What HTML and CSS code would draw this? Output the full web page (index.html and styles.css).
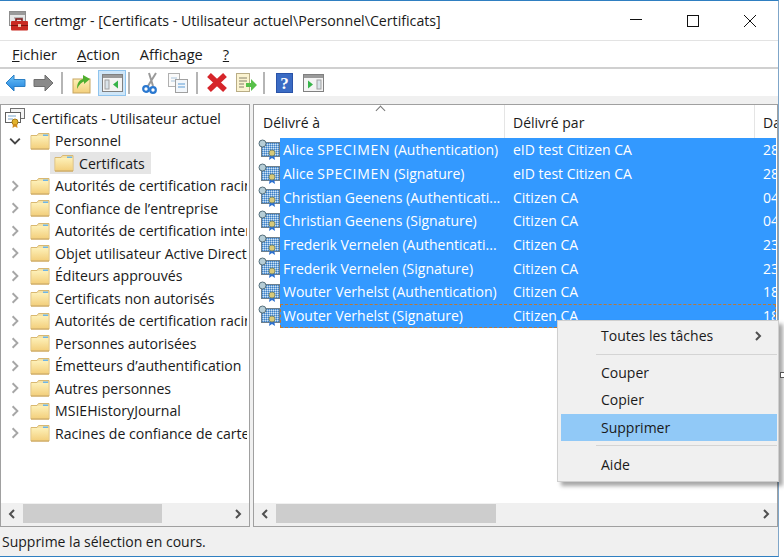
FILE: index.html
```html
<!DOCTYPE html>
<html lang="fr">
<head>
  <meta charset="UTF-8">
  <title>certmgr</title>
  <link rel="stylesheet" href="styles.css">
</head>
<body>
  <svg class="defs" width="0" height="0">
    <defs>
      <linearGradient id="folderFill" x1="0" y1="0" x2="0" y2="1">
        <stop offset="0" stop-color="#fdf0b8"/>
        <stop offset="1" stop-color="#f3cf7c"/>
      </linearGradient>
      <linearGradient id="backFill" x1="0" y1="0" x2="0" y2="1">
        <stop offset="0" stop-color="#6cc4f8"/>
        <stop offset="1" stop-color="#1f7fdc"/>
      </linearGradient>
      <pattern id="dither" width="2" height="2" patternUnits="userSpaceOnUse">
        <rect width="2" height="2" fill="#7fb0de"/>
        <rect width="1" height="1" fill="#3f7fc4"/>
        <rect x="1" y="1" width="1" height="1" fill="#cfe2f4"/>
      </pattern>
      <symbol id="folder" viewBox="0 0 20 18">
        <path d="M1 3.500h6l1.500-2h10.500v15.500h-18z" fill="#f5e2a5" stroke="#d9b871"/>
        <rect x="1.500" y="4" width="17" height="12.500" fill="url(#folderFill)"/>
        <rect x="13" y="2.500" width="5" height="1.500" fill="#6fb5e6"/>
        <path d="M1 17h18" stroke="#c9a45c"/>
      </symbol>
      <symbol id="cert" viewBox="0 0 22 22">
        <rect x="3.500" y="3.500" width="18" height="14" fill="url(#dither)" stroke="#6d7f8c"/>
        <circle cx="4.500" cy="4.500" r="3.500" fill="#b6cdd6" stroke="#56707c"/>
        <path d="M12 15l-1 6 3-2 3 2-1-6z" fill="#2a6fd0"/>
        <circle cx="14" cy="14" r="3" fill="#d8c978" stroke="#7c8a6c"/>
      </symbol>
      <symbol id="chevron" viewBox="0 0 10 10">
        <path d="M3 1l4 4-4 4" fill="none" stroke="#a6a6a6" stroke-width="1.600"/>
      </symbol>
      <symbol id="chevronDark" viewBox="0 0 10 10">
        <path d="M3 1l4 4-4 4" fill="none" stroke="#505050" stroke-width="2"/>
      </symbol>
    </defs>
  </svg>

  <div class="window">
    <div class="titlebar">
      <svg class="app-icon" width="20" height="20" viewBox="0 0 20 20">
        <rect x="0.500" y="0.500" width="16" height="14" fill="#e6e6e6" stroke="#8d8d8d"/>
        <rect x="1" y="1" width="15" height="3" fill="#9a9a9a"/>
        <rect x="5" y="6" width="9" height="2" fill="#b8b8b8"/>
        <path d="M7 10V8h6v2" fill="none" stroke="#7a1515" stroke-width="1.500"/>
        <rect x="2" y="10" width="17" height="9.500" rx="1" fill="#c92a22"/>
        <rect x="2" y="14" width="17" height="1" fill="#7f1410"/>
        <rect x="9" y="13" width="3" height="3" fill="#f0c8b0"/>
      </svg>
      <span class="title">certmgr - [Certificats - Utilisateur actuel\Personnel\Certificats]</span>
      <div class="caption">
        <svg class="cap-btn" width="14" height="14" viewBox="0 0 14 14"><path d="M1 5.500h12" stroke="#111"/></svg>
        <svg class="cap-btn" width="14" height="14" viewBox="0 0 14 14"><rect x="1.500" y="1.500" width="11" height="11" fill="none" stroke="#111"/></svg>
        <svg class="cap-btn" width="14" height="14" viewBox="0 0 14 14"><path d="M1 1l12 12M13 1L1 13" stroke="#111"/></svg>
      </div>
    </div>

    <div class="menubar">
      <span class="menu"><u>F</u>ichier</span>
      <span class="menu"><u>A</u>ction</span>
      <span class="menu">Affic<u>h</u>age</span>
      <span class="menu"><u>?</u></span>
    </div>

    <div class="toolbar">
      <span class="tool">
        <svg width="21" height="18" viewBox="0 0 21 18"><path d="M1 9l8-8v4.500h11v7H9V17z" fill="url(#backFill)" stroke="#2b7fc4"/></svg>
      </span>
      <span class="tool">
        <svg width="21" height="18" viewBox="0 0 21 18"><path d="M20 9l-8-8v4.500H1v7h11V17z" fill="#8a8a8a" stroke="#6f6f6f"/></svg>
      </span>
      <span class="tool-sep"></span>
      <span class="tool tool-first">
        <svg width="20" height="22" viewBox="0 0 20 22"><rect x="1" y="7" width="17" height="14" fill="url(#folderFill)" stroke="#c7a560"/><path d="M5 17c0-6 2-9 6-10V3l7 4-6 5V9.500c-2 .5-5 3-7 7.500z" fill="#4fae2e"/></svg>
      </span>
      <span class="tool tool-on">
        <svg width="21" height="18" viewBox="0 0 21 18"><rect x="0.500" y="0.500" width="20" height="17" fill="#f4f4f4" stroke="#808080"/><rect x="1" y="1" width="19" height="3" fill="#9a9a9a"/><rect x="3" y="6" width="4" height="9" fill="#d9e3ea" stroke="#a0a0a0"/><path d="M16 6.500v8l-5-4z" fill="#37b44a"/></svg>
      </span>
      <span class="tool-sep sep-near"></span>
      <span class="tool tool-first tool-cut">
        <svg width="16" height="22" viewBox="0 0 16 22"><path d="M14 1L6 14M7 1l4 13" stroke="#9a9a9a" stroke-width="2" fill="none"/><circle cx="4" cy="17" r="2.800" fill="none" stroke="#2a78d0" stroke-width="2.200"/><circle cx="11" cy="18" r="2.800" fill="none" stroke="#2a78d0" stroke-width="2.200"/></svg>
      </span>
      <span class="tool">
        <svg width="20" height="20" viewBox="0 0 20 20"><rect x="0.500" y="0.500" width="11" height="13" fill="#fafafa" stroke="#b0b0b0"/><path d="M3 5h6M3 8h6" stroke="#a8c4dc"/><rect x="7.500" y="6.500" width="12" height="13" fill="#f2f6fa" stroke="#a0a0a0"/><path d="M10 11h7M10 14h7" stroke="#5a9bd5"/></svg>
      </span>
      <span class="tool-sep"></span>
      <span class="tool tool-first">
        <svg width="22" height="21" viewBox="0 0 22 21"><path d="M3 3l16 15M19 3L3 18" stroke="#d6252a" stroke-width="5.500"/></svg>
      </span>
      <span class="tool tool-wide">
        <svg width="22" height="20" viewBox="0 0 22 20"><rect x="1.500" y="0.500" width="13" height="18" fill="#fbf3d0" stroke="#b9ad86"/><path d="M4 5h8M4 8h8M4 11h5M4 14h5" stroke="#85806a"/><path d="M11 10h5V6l6 6-6 6v-4h-5z" fill="#58c04a"/></svg>
      </span>
      <span class="tool-sep sep-help"></span>
      <span class="tool tool-first">
        <svg width="17" height="20" viewBox="0 0 17 20"><rect width="17" height="20" fill="#2a53a8"/><rect x="1" y="1" width="15" height="18" fill="#3a6bc4"/><text x="8.500" y="16" class="help-mark">?</text></svg>
      </span>
      <span class="tool tool-wide">
        <svg width="21" height="18" viewBox="0 0 21 18"><rect x="0.500" y="0.500" width="20" height="17" fill="#f4f4f4" stroke="#808080"/><rect x="1" y="1" width="19" height="3" fill="#9a9a9a"/><rect x="14" y="6" width="4" height="9" fill="#d9e3ea" stroke="#a0a0a0"/><path d="M5 6.500v8l5-4z" fill="#37b44a"/></svg>
      </span>
    </div>

    <div class="strip"></div>

    <div class="panes">
      <div class="pane pane-tree">
        <div class="tree">
          <div class="node node-root">
            <svg width="20" height="20" viewBox="0 0 20 20"><rect x="5.500" y="0.500" width="14" height="10" fill="#f4f4f4" stroke="#707070"/><rect x="0.500" y="4.500" width="15" height="10" fill="#fff" stroke="#606060"/><path d="M3 8h8M3 11h5" stroke="#7aa6cc"/><circle cx="10" cy="14" r="3" fill="#e2b22c" stroke="#a87c14"/><path d="M8 16l-.5 4 2.500-1.500 2.500 1.500-.5-4z" fill="#d08c1c"/></svg>
            <span>Certificats - Utilisateur actuel</span>
          </div>
          <div class="node">
            <svg class="twist" width="12" height="12" viewBox="0 0 10 10"><path d="M1 3l4 4 4-4" fill="none" stroke="#444" stroke-width="1.600"/></svg>
            <svg class="folder" width="20" height="18"><use href="#folder"/></svg>
            <span>Personnel</span>
          </div>
          <div class="node node-leaf">
            <span class="node-sel">
              <svg class="folder" width="20" height="18"><use href="#folder"/></svg>
              <span>Certificats</span>
            </span>
          </div>
          <div class="node"><svg class="twist" width="12" height="12"><use href="#chevron"/></svg><svg class="folder" width="20" height="18"><use href="#folder"/></svg><span>Autorités de certification racines de confiance</span></div>
          <div class="node"><svg class="twist" width="12" height="12"><use href="#chevron"/></svg><svg class="folder" width="20" height="18"><use href="#folder"/></svg><span>Confiance de l’entreprise</span></div>
          <div class="node"><svg class="twist" width="12" height="12"><use href="#chevron"/></svg><svg class="folder" width="20" height="18"><use href="#folder"/></svg><span>Autorités de certification intermédiaires</span></div>
          <div class="node"><svg class="twist" width="12" height="12"><use href="#chevron"/></svg><svg class="folder" width="20" height="18"><use href="#folder"/></svg><span>Objet utilisateur Active Directory</span></div>
          <div class="node"><svg class="twist" width="12" height="12"><use href="#chevron"/></svg><svg class="folder" width="20" height="18"><use href="#folder"/></svg><span>Éditeurs approuvés</span></div>
          <div class="node"><svg class="twist" width="12" height="12"><use href="#chevron"/></svg><svg class="folder" width="20" height="18"><use href="#folder"/></svg><span>Certificats non autorisés</span></div>
          <div class="node"><svg class="twist" width="12" height="12"><use href="#chevron"/></svg><svg class="folder" width="20" height="18"><use href="#folder"/></svg><span>Autorités de certification racines tierces</span></div>
          <div class="node"><svg class="twist" width="12" height="12"><use href="#chevron"/></svg><svg class="folder" width="20" height="18"><use href="#folder"/></svg><span>Personnes autorisées</span></div>
          <div class="node"><svg class="twist" width="12" height="12"><use href="#chevron"/></svg><svg class="folder" width="20" height="18"><use href="#folder"/></svg><span>Émetteurs d’authentification</span></div>
          <div class="node"><svg class="twist" width="12" height="12"><use href="#chevron"/></svg><svg class="folder" width="20" height="18"><use href="#folder"/></svg><span>Autres personnes</span></div>
          <div class="node"><svg class="twist" width="12" height="12"><use href="#chevron"/></svg><svg class="folder" width="20" height="18"><use href="#folder"/></svg><span>MSIEHistoryJournal</span></div>
          <div class="node"><svg class="twist" width="12" height="12"><use href="#chevron"/></svg><svg class="folder" width="20" height="18"><use href="#folder"/></svg><span>Racines de confiance de carte à puce</span></div>
        </div>
        <div class="hscroll">
          <svg width="10" height="10" class="flip"><use href="#chevronDark"/></svg>
          <div class="track"><div class="thumb thumb-tree"></div></div>
          <svg width="10" height="10"><use href="#chevronDark"/></svg>
        </div>
      </div>

      <div class="pane pane-list">
        <div class="list">
          <div class="list-head">
            <span class="sort-mark"></span>
            <div class="col col-a">Délivré à</div>
            <div class="col col-b">Délivré par</div>
            <div class="col col-c">Da</div>
          </div>
          <div class="row"><svg class="cert" width="22" height="22"><use href="#cert"/></svg><div class="row-sel"><div class="col col-a">Alice <span class="caps">SPECIMEN</span> (Authentication)</div><div class="col col-b">eID test Citizen CA</div><div class="col col-c">28</div></div></div>
          <div class="row"><svg class="cert" width="22" height="22"><use href="#cert"/></svg><div class="row-sel"><div class="col col-a">Alice <span class="caps">SPECIMEN</span> (Signature)</div><div class="col col-b">eID test Citizen CA</div><div class="col col-c">28</div></div></div>
          <div class="row"><svg class="cert" width="22" height="22"><use href="#cert"/></svg><div class="row-sel"><div class="col col-a">Christian Geenens (Authenticati...</div><div class="col col-b">Citizen CA</div><div class="col col-c">04</div></div></div>
          <div class="row"><svg class="cert" width="22" height="22"><use href="#cert"/></svg><div class="row-sel"><div class="col col-a">Christian Geenens (Signature)</div><div class="col col-b">Citizen CA</div><div class="col col-c">04</div></div></div>
          <div class="row"><svg class="cert" width="22" height="22"><use href="#cert"/></svg><div class="row-sel"><div class="col col-a">Frederik Vernelen (Authenticati...</div><div class="col col-b">Citizen CA</div><div class="col col-c">23</div></div></div>
          <div class="row"><svg class="cert" width="22" height="22"><use href="#cert"/></svg><div class="row-sel"><div class="col col-a">Frederik Vernelen (Signature)</div><div class="col col-b">Citizen CA</div><div class="col col-c">23</div></div></div>
          <div class="row"><svg class="cert" width="22" height="22"><use href="#cert"/></svg><div class="row-sel"><div class="col col-a">Wouter Verhelst (Authentication)</div><div class="col col-b">Citizen CA</div><div class="col col-c">18</div></div></div>
          <div class="row"><svg class="cert" width="22" height="22"><use href="#cert"/></svg><div class="row-sel row-focus"><div class="col col-a">Wouter Verhelst (Signature)</div><div class="col col-b">Citizen CA</div><div class="col col-c">18</div></div></div>
        </div>
        <div class="hscroll">
          <svg width="10" height="10" class="flip"><use href="#chevronDark"/></svg>
          <div class="track"><div class="thumb thumb-list"></div></div>
          <svg width="10" height="10"><use href="#chevronDark"/></svg>
        </div>
      </div>
    </div>

    <div class="statusbar">Supprime la sélection en cours.</div>
  </div>

  <div class="context">
    <div class="ctx-item ctx-sub"><span>Toutes les tâches</span><svg width="10" height="10"><use href="#chevronDark"/></svg></div>
    <div class="ctx-sep"></div>
    <div class="ctx-item">Couper</div>
    <div class="ctx-item">Copier</div>
    <div class="ctx-item ctx-hot">Supprimer</div>
    <div class="ctx-sep ctx-sep-low"></div>
    <div class="ctx-item">Aide</div>
  </div>
  <span class="grip"></span>
</body>
</html>
```

FILE: styles.css
```css
html, body {
  margin: 0;
  height: 100%;
  background-color: #fff;
}
body {
  font-family: "Open Sans", "Noto Sans", sans-serif;
  font-size: 14px;
  color: #1a1a1a;
  overflow: hidden;
}
.defs {
  position: absolute;
}
.window {
  width: 778px;
  height: 555px;
  border-top: 1px solid #2f7fc1;
  border-right: 1px solid #7fa6c9;
  border-bottom: 1px solid #2f7fc1;
  display: flex;
  flex-direction: column;
  background-color: #fff;
}

.titlebar {
  height: 39px;
  display: flex;
  align-items: center;
  padding-left: 9px;
  border-bottom: 1px solid #e3e3e3;
}
.title {
  margin-left: 5px;
  font-size: 14.200px;
  white-space: nowrap;
}
.caption {
  margin-left: auto;
  display: flex;
  gap: 43px;
  padding-right: 21px;
}

.menubar {
  height: 26px;
  display: flex;
  align-items: center;
  padding-left: 12px;
  gap: 20px;
  font-size: 14.600px;
}
.toolbar {
  height: 27px;
  border-top: 2px solid #d0d0d0;
  display: flex;
  align-items: center;
  padding-left: 1px;
}
.tool {
  width: 28px;
  height: 26px;
  box-sizing: border-box;
  display: flex;
  align-items: center;
  justify-content: center;
}
.tool-on {
  margin-left: 2px;
  background-color: #cfe6f8;
  border: 1px solid #8fc4ee;
}
.tool-first {
  margin-left: 5px;
}
.tool-cut {
  margin-left: 6px;
}
.tool-wide {
  margin-left: 1px;
}
.tool-sep {
  width: 2px;
  height: 22px;
  margin-left: 4px;
  background-color: #b5b5b5;
}
.sep-near {
  margin-left: 2px;
}
.sep-help {
  margin-left: 3px;
}
.help-mark {
  font-family: "Liberation Serif", serif;
  font-size: 17px;
  font-weight: bold;
  fill: #fff;
  text-anchor: middle;
}
.strip {
  height: 8px;
  background-color: #f0f0f0;
}

.panes {
  flex: 1;
  min-height: 0;
  display: flex;
  gap: 3px;
  background-color: #f0f0f0;
}
.pane {
  box-sizing: border-box;
  border: 1px solid #a0a0a0;
  background-color: #fff;
  display: flex;
  flex-direction: column;
  min-width: 0;
}
.pane-tree {
  width: 250px;
}
.pane-list {
  flex: 1;
}

.tree {
  flex: 1;
  overflow: hidden;
  padding-top: 2px;
}
.node {
  height: 22.500px;
  display: flex;
  align-items: center;
  white-space: nowrap;
  padding-left: 8px;
  margin-right: 2px;
  overflow: hidden;
  font-size: 14.100px;
}
.node-root {
  padding-left: 4px;
  gap: 7px;
}
.node-leaf {
  padding-left: 49px;
}
.node-sel {
  display: flex;
  align-items: center;
  height: 22px;
  padding: 0 6px 0 4px;
  background-color: #e5e5e5;
}
.twist {
  flex-shrink: 0;
}
.folder {
  flex-shrink: 0;
  margin-left: 9px;
  margin-right: 5px;
}
.node-sel .folder {
  margin-left: 0;
  margin-right: 5px;
}

.list {
  flex: 1;
  overflow: hidden;
  position: relative;
}
.list-head {
  height: 33px;
  display: flex;
  align-items: center;
  padding-left: 9px;
  white-space: nowrap;
  position: relative;
}
.list-head .col {
  padding-top: 2px;
}
.sort-mark {
  position: absolute;
  left: 123px;
  top: 2px;
  width: 6px;
  height: 6px;
  border-left: 1px solid #777;
  border-top: 1px solid #777;
  transform: rotate(45deg);
}
.col-a {
  width: 241px;
  flex-shrink: 0;
}
.col-b {
  width: 241px;
  flex-shrink: 0;
  padding-left: 9px;
}
.col-c {
  padding-left: 9px;
  flex-shrink: 0;
}
.list-head .col-b,
.list-head .col-c {
  align-self: stretch;
  display: flex;
  align-items: center;
  padding-left: 8px;
  border-left: 1px solid #e5e5e5;
}
.row {
  height: 23.700px;
  display: flex;
  align-items: center;
  white-space: nowrap;
  padding-left: 4px;
}
.cert {
  width: 22px;
  flex-shrink: 0;
}
.row-sel {
  flex: 1;
  height: 100%;
  min-width: 0;
  box-sizing: border-box;
  display: flex;
  align-items: center;
  padding-left: 3px;
  margin-right: 1px;
  background-color: #3399ff;
  color: #fff;
  overflow: hidden;
}
.row-sel .col-a {
  width: 221px;
  overflow: hidden;
}
.caps {
  letter-spacing: 0.700px;
}
.row-focus {
  outline: 1px dashed #b8793a;
  outline-offset: -1px;
}

.hscroll {
  height: 19px;
  padding: 1px 6px 3px;
  display: flex;
  align-items: center;
  background-color: #f0f0f0;
}
.hscroll .track {
  flex: 1;
  height: 100%;
  margin: 0 6px;
}
.thumb {
  height: 100%;
  background-color: #cdcdcd;
}
.thumb-tree {
  width: 139px;
}
.thumb-list {
  width: 220px;
}
.flip {
  transform: scaleX(-1);
}

.statusbar {
  height: 29px;
  display: flex;
  align-items: center;
  padding-left: 2px;
  background-color: #f0f0f0;
}

.context {
  position: absolute;
  left: 557px;
  top: 320px;
  width: 222px;
  height: 162px;
  box-sizing: border-box;
  padding: 1px 1px 1px 3px;
  background-color: #f0f0f0;
  border: 1px solid #cfcfcf;
  box-shadow: 4px 4px 4px rgba(0, 0, 0, 0.35);
}
.ctx-item {
  height: 27.500px;
  display: flex;
  align-items: center;
  padding-left: 40px;
}
.ctx-sub {
  justify-content: space-between;
  padding-right: 14px;
}
.ctx-hot {
  background-color: #91c9f7;
}
.ctx-sep {
  height: 1px;
  margin: 4px 0 4px 35px;
  background-color: #d4d4d4;
}
.ctx-sep-low {
  margin-bottom: 5px;
}
.grip {
  position: absolute;
  left: 780px;
  top: 372px;
  width: 4px;
  height: 4px;
  background-color: #fff;
  border: 1px solid #555;
}
```
